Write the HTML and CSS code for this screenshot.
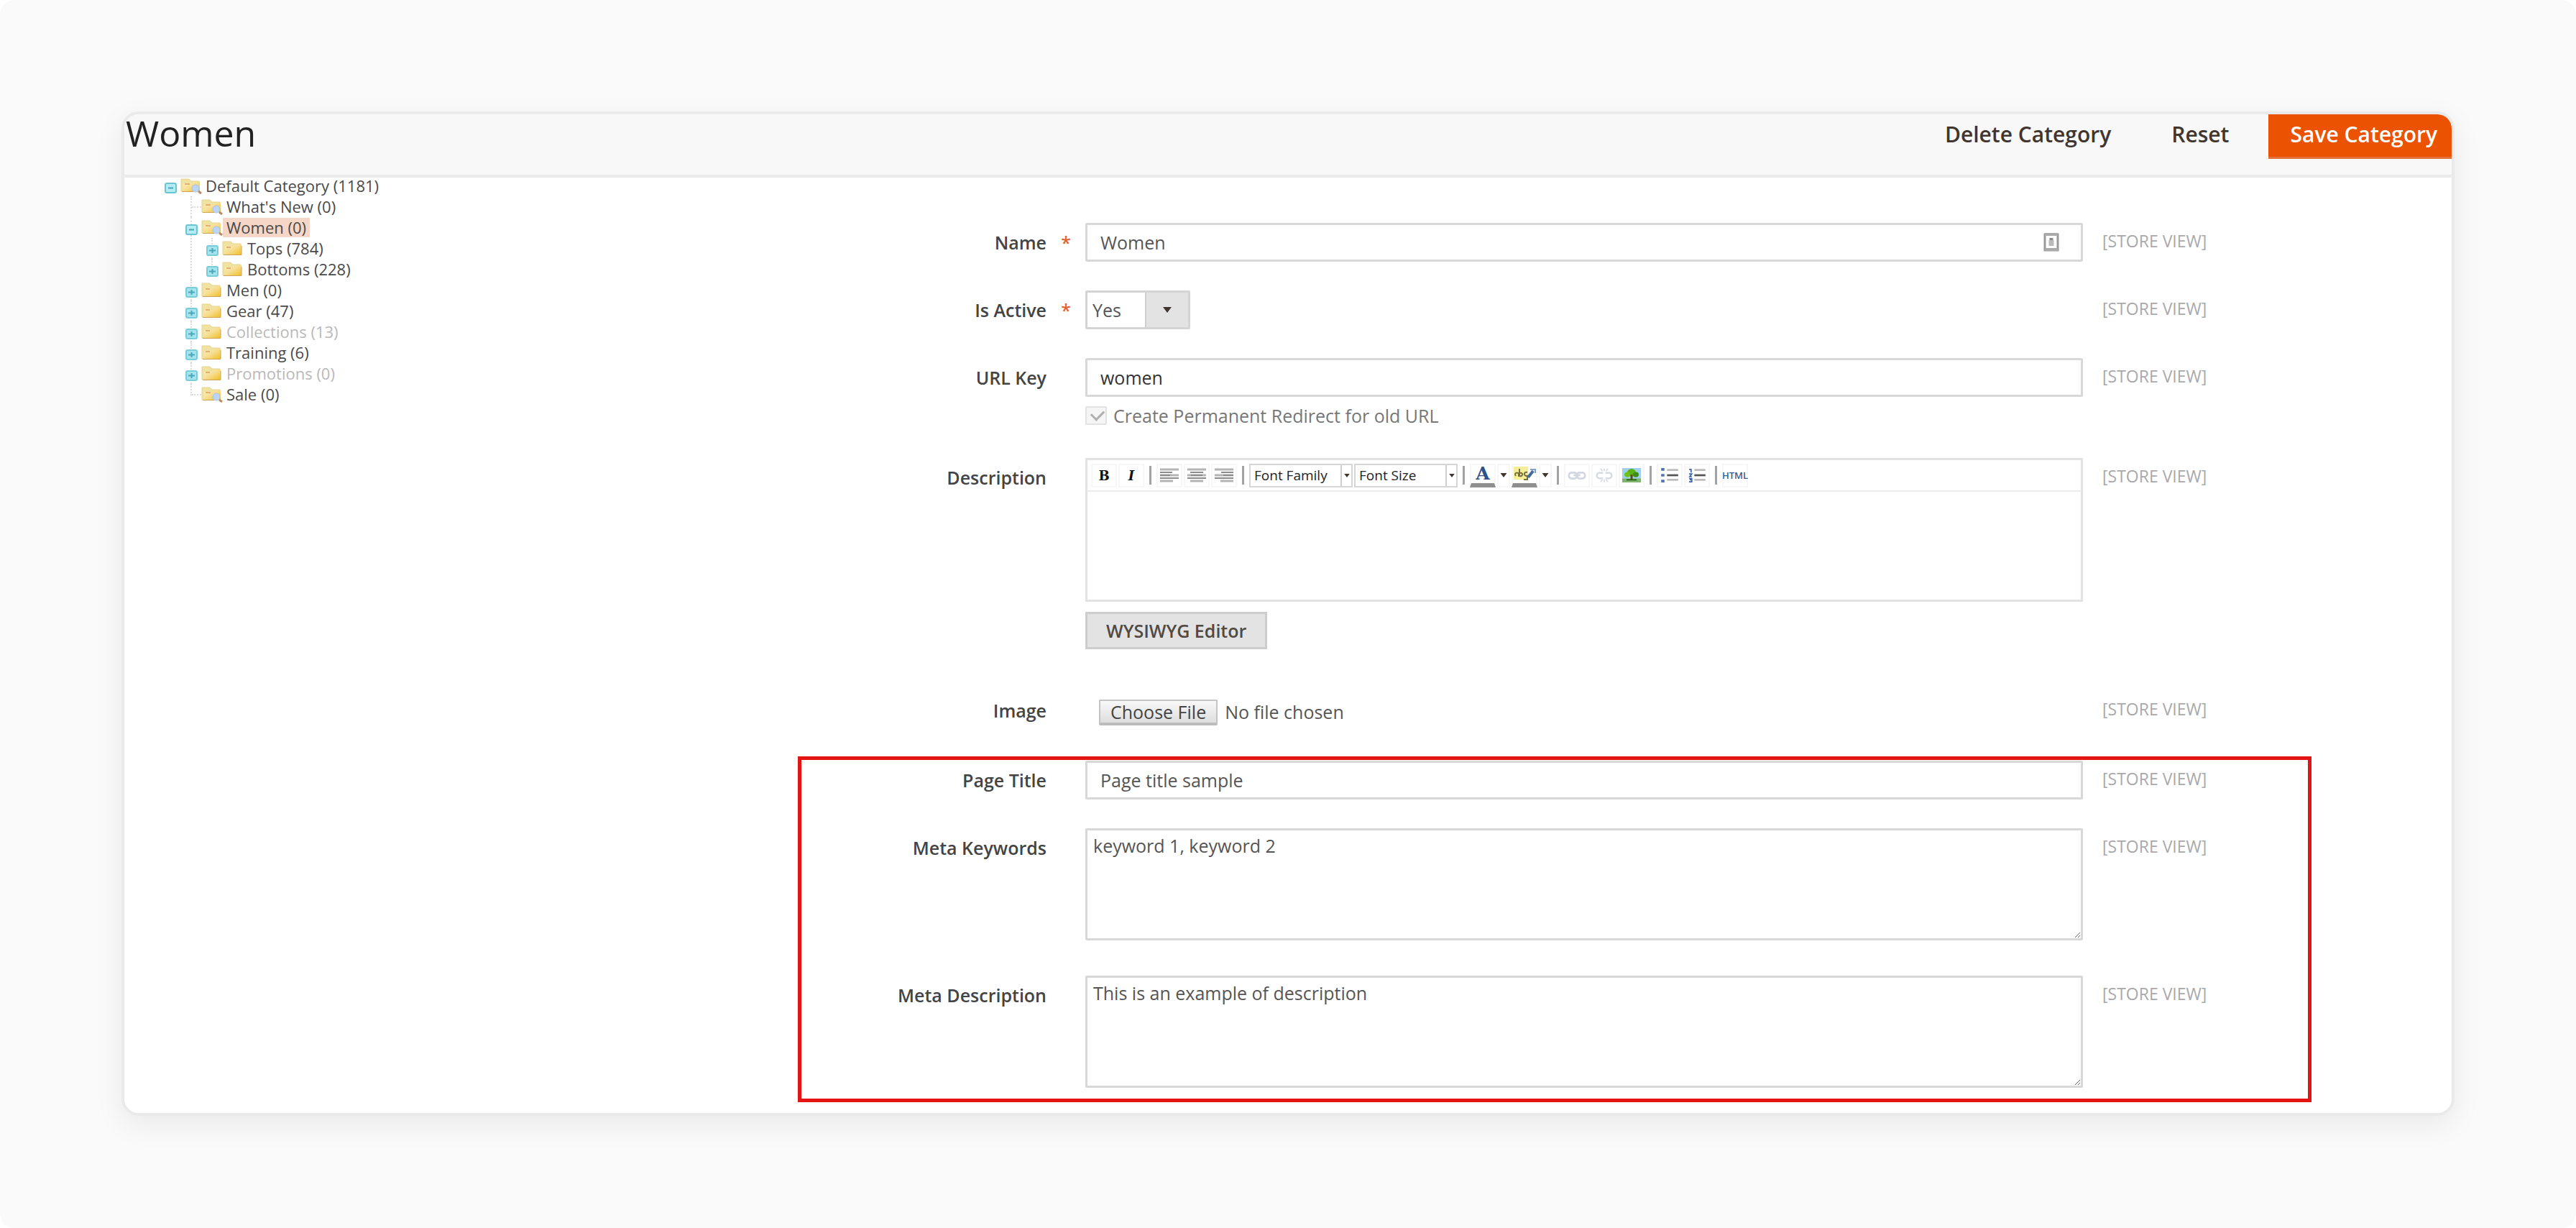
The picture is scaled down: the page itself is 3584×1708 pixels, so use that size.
FILE: index.html
```html
<!DOCTYPE html>
<html lang="en">
<head>
    <meta charset="UTF-8">
    <meta name="viewport" content="width=device-width, initial-scale=1.0">
    <title>Women / Categories</title>
    <link rel="stylesheet" href="styles.css">
</head>
<body>
    <!-- shared icons -->
    <svg class="sprite" aria-hidden="true">
        <defs>
            <linearGradient id="gold" x1="0" y1="0" x2="1" y2="1">
                <stop offset="0" stop-color="#fbf0c8"/>
                <stop offset="0.5" stop-color="#f6dc8c"/>
                <stop offset="1" stop-color="#eec024"/>
            </linearGradient>
        </defs>
        <symbol id="folder" viewBox="0 0 30 22">
            <path d="M1 1h11l3 3h11v15H1z" fill="#f0e2a0" stroke="#e6d48e"/>
            <path d="M4 8h11l3-3h9v14H4z" fill="url(#gold)"/>
            <path d="M6 9h6" stroke="#e2b070" stroke-width="2"/>
            <path d="M2 19.500h25V7" fill="none" stroke="#d0a458"/>
        </symbol>
        <symbol id="folder-search" viewBox="0 0 30 22">
            <path d="M1 1h11l3 3h11v14H1z" fill="#f0e2a0" stroke="#e6d48e"/>
            <path d="M4 7h11l3-2h9v13H4z" fill="url(#gold)"/>
            <path d="M6 8h7" stroke="#e2b070" stroke-width="2"/>
            <path d="M2 18.500h16" stroke="#d0a458"/>
            <circle cx="21" cy="14" r="5" fill="#bcd4f6" stroke="#a9c3ea"/>
            <path d="M25 18l4 3" stroke="#b88a66" stroke-width="3"/>
        </symbol>
        <symbol id="minus" viewBox="0 0 17 15">
            <rect x="1" y="1" width="15" height="13" rx="2" fill="#b4ecf4" stroke="#6cc4d2" stroke-width="2"/>
            <path d="M5 7.500h7" stroke="#4aa6b8" stroke-width="2"/>
        </symbol>
        <symbol id="plus" viewBox="0 0 17 15">
            <rect x="1" y="1" width="15" height="13" rx="2" fill="#a4e4ee" stroke="#7accd8" stroke-width="2"/>
            <path d="M4 7.500h9M8.500 4v7" stroke="#4aa6b8" stroke-width="2"/>
        </symbol>
        <symbol id="caret" viewBox="0 0 12 8">
            <path d="M0 0h12L6 8z" fill="#41362f"/>
        </symbol>
    </svg>

    <div class="page">
        <div class="card">
            <header class="header">
                <h1>Women</h1>
                <div class="actions">
                    <button type="button" class="btn-text">Delete Category</button>
                    <button type="button" class="btn-text">Reset</button>
                    <button type="submit" form="categoryForm" class="btn-save">Save Category</button>
                </div>
            </header>

            <div class="content">
                <nav class="tree" aria-label="Categories">
                    <ul>
                        <li>
                            <div class="node">
                                <button type="button" aria-label="Collapse"><svg><use href="#minus"/></svg></button>
                                <svg class="folder"><use href="#folder-search"/></svg>
                                <a href="#">Default Category (1181)</a>
                            </div>
                            <ul>
                                <li>
                                    <div class="node leaf">
                                        <svg class="folder"><use href="#folder-search"/></svg>
                                        <a href="#">What's New (0)</a>
                                    </div>
                                </li>
                                <li>
                                    <div class="node">
                                        <button type="button" aria-label="Collapse"><svg><use href="#minus"/></svg></button>
                                        <svg class="folder"><use href="#folder-search"/></svg>
                                        <a href="#" class="selected">Women (0)</a>
                                    </div>
                                    <ul>
                                        <li>
                                            <div class="node">
                                                <button type="button" aria-label="Expand"><svg><use href="#plus"/></svg></button>
                                                <svg class="folder"><use href="#folder"/></svg>
                                                <a href="#">Tops (784)</a>
                                            </div>
                                        </li>
                                        <li>
                                            <div class="node">
                                                <button type="button" aria-label="Expand"><svg><use href="#plus"/></svg></button>
                                                <svg class="folder"><use href="#folder"/></svg>
                                                <a href="#">Bottoms (228)</a>
                                            </div>
                                        </li>
                                    </ul>
                                </li>
                                <li>
                                    <div class="node">
                                        <button type="button" aria-label="Expand"><svg><use href="#plus"/></svg></button>
                                        <svg class="folder"><use href="#folder"/></svg>
                                        <a href="#">Men (0)</a>
                                    </div>
                                </li>
                                <li>
                                    <div class="node">
                                        <button type="button" aria-label="Expand"><svg><use href="#plus"/></svg></button>
                                        <svg class="folder"><use href="#folder"/></svg>
                                        <a href="#">Gear (47)</a>
                                    </div>
                                </li>
                                <li>
                                    <div class="node">
                                        <button type="button" aria-label="Expand"><svg><use href="#plus"/></svg></button>
                                        <svg class="folder"><use href="#folder"/></svg>
                                        <a href="#" class="inactive">Collections (13)</a>
                                    </div>
                                </li>
                                <li>
                                    <div class="node">
                                        <button type="button" aria-label="Expand"><svg><use href="#plus"/></svg></button>
                                        <svg class="folder"><use href="#folder"/></svg>
                                        <a href="#">Training (6)</a>
                                    </div>
                                </li>
                                <li>
                                    <div class="node">
                                        <button type="button" aria-label="Expand"><svg><use href="#plus"/></svg></button>
                                        <svg class="folder"><use href="#folder"/></svg>
                                        <a href="#" class="inactive">Promotions (0)</a>
                                    </div>
                                </li>
                                <li>
                                    <div class="node leaf">
                                        <svg class="folder"><use href="#folder-search"/></svg>
                                        <a href="#">Sale (0)</a>
                                    </div>
                                </li>
                            </ul>
                        </li>
                    </ul>
                </nav>

                <form id="categoryForm" class="form">
                    <div class="field required">
                        <label for="name">Name</label>
                        <div class="control">
                            <input type="text" id="name" value="Women">
                            <svg class="autofill" viewBox="0 0 22 26" aria-hidden="true">
                                <rect x="2" y="2" width="18" height="22" fill="#fff" stroke="#999" stroke-width="3"/>
                                <path d="M2 2h18M2 23h18" stroke="#aaa" stroke-width="4"/>
                                <path d="M11 7v3" stroke="#888" stroke-width="5"/>
                                <path d="M11 10v8" stroke="#bbb" stroke-width="7"/>
                            </svg>
                        </div>
                        <span class="scope">[STORE VIEW]</span>
                    </div>

                    <div class="field required">
                        <label for="isActive">Is Active</label>
                        <div class="control">
                            <div class="select">
                                <select id="isActive">
                                    <option>Yes</option>
                                    <option>No</option>
                                </select>
                                <span class="arrow"><svg><use href="#caret"/></svg></span>
                            </div>
                        </div>
                        <span class="scope">[STORE VIEW]</span>
                    </div>

                    <div class="field">
                        <label for="urlKey">URL Key</label>
                        <div class="control">
                            <input type="text" id="urlKey" class="dark" value="women">
                            <div class="check">
                                <input type="checkbox" id="redirect" checked disabled>
                                <label for="redirect">Create Permanent Redirect for old URL</label>
                            </div>
                        </div>
                        <span class="scope">[STORE VIEW]</span>
                    </div>

                    <div class="field">
                        <label for="description">Description</label>
                        <div class="control">
                            <div class="editor">
                                <div class="toolbar">
                                    <button type="button" class="bold">B</button>
                                    <button type="button" class="italic">I</button>
                                    <span class="sep"></span>
                                    <button type="button" aria-label="Align left"><svg viewBox="0 0 26 20"><path d="M0 2h26M0 10h26M0 18h18" stroke="#b4b4b4" stroke-width="3"/><path d="M0 6h17M0 14h26M0 10h14" stroke="#8c8c8c" stroke-width="2"/></svg></button>
                                    <button type="button" aria-label="Align center"><svg viewBox="0 0 26 20"><path d="M0 2h26M0 10h26M4 18h18" stroke="#b4b4b4" stroke-width="3"/><path d="M4 6h18M0 14h26M5 10h16" stroke="#8c8c8c" stroke-width="2"/></svg></button>
                                    <button type="button" aria-label="Align right"><svg viewBox="0 0 26 20"><path d="M0 2h26M0 10h26M8 18h18" stroke="#b4b4b4" stroke-width="3"/><path d="M9 6h17M0 14h26M12 10h14" stroke="#8c8c8c" stroke-width="2"/></svg></button>
                                    <span class="sep"></span>
                                    <div class="tool-select">
                                        <select aria-label="Font Family"><option>Font Family</option></select>
                                        <span class="arrow"><svg><use href="#caret"/></svg></span>
                                    </div>
                                    <div class="tool-select">
                                        <select aria-label="Font Size"><option>Font Size</option></select>
                                        <span class="arrow"><svg><use href="#caret"/></svg></span>
                                    </div>
                                    <span class="sep"></span>
                                    <button type="button" class="color">A</button>
                                    <button type="button" class="more" aria-label="Text color"><svg><use href="#caret"/></svg></button>
                                    <button type="button" class="color" aria-label="Highlight"><svg viewBox="0 0 32 20"><rect x="1" y="0" width="20" height="18" fill="#f5ef9a"/><path d="M4 13c-3-4 2-6 4-3v4M9 3v10c5 2 6-6 0-4M20 8c-5-2-6 6 0 5v5h-5" fill="none" stroke="#77703a" stroke-width="2"/><path d="M21 15l7-9" stroke="#46699c" stroke-width="4"/><path d="M24 4h7v5" fill="none" stroke="#7fa0cc" stroke-width="2"/></svg></button>
                                    <button type="button" class="more" aria-label="Highlight color"><svg><use href="#caret"/></svg></button>
                                    <span class="sep"></span>
                                    <button type="button" disabled aria-label="Link"><svg viewBox="0 0 28 20"><g fill="none" stroke="#d3d7e2" stroke-width="3"><rect x="2" y="6" width="12" height="9" rx="4"/><rect x="14" y="6" width="12" height="9" rx="4"/><path d="M9 10h10"/></g></svg></button>
                                    <button type="button" disabled aria-label="Unlink"><svg viewBox="0 0 28 24"><g fill="none" stroke="#d6dae3" stroke-width="3"><path d="M12 8H6a4 4 0 0 0 0 9h6M16 8h6a4 4 0 0 1 0 9h-6"/><path d="M8 1l3 4M14 1v4M20 1l-3 4M8 23l3-4M14 23v-4M20 23l-3-4" stroke-width="2"/></g></svg></button>
                                    <button type="button" aria-label="Image"><svg viewBox="0 0 26 22" preserveAspectRatio="none"><rect width="26" height="22" fill="#9fd0ee"/><path d="M0 16h26v6H0z" fill="#7fb56f"/><circle cx="13" cy="7" r="6" fill="#5cb414"/><circle cx="7" cy="10" r="4" fill="#6ec21c"/><circle cx="19" cy="10" r="4" fill="#3d8f10"/><path d="M13 10v8" stroke="#5d4a1c" stroke-width="3"/><path d="M6 18h14" stroke="#27620e" stroke-width="2"/></svg></button>
                                    <span class="sep"></span>
                                    <button type="button" aria-label="Bulleted list"><svg viewBox="0 0 26 22"><path d="M0 2h5M0 11h5M0 20h5" stroke="#4c74b8" stroke-width="4"/><path d="M9 3h17M9 18h17" stroke="#bdbdbd" stroke-width="3"/><path d="M9 11h17" stroke="#555" stroke-width="3"/></svg></button>
                                    <button type="button" aria-label="Numbered list"><svg viewBox="0 0 26 22"><path d="M1 2h3v5M1 9h4l-3 4h3M1 16h4v5H1M2 18h3" fill="none" stroke="#3f66b0" stroke-width="2"/><path d="M9 3h17M9 18h17" stroke="#bdbdbd" stroke-width="3"/><path d="M9 11h17" stroke="#555" stroke-width="3"/></svg></button>
                                    <span class="sep"></span>
                                    <button type="button" class="html">HTML</button>
                                </div>
                                <textarea id="description"></textarea>
                            </div>
                            <button type="button" class="btn-editor">WYSIWYG Editor</button>
                        </div>
                        <span class="scope">[STORE VIEW]</span>
                    </div>

                    <div class="field">
                        <label for="image">Image</label>
                        <div class="control">
                            <input type="file" id="image">
                        </div>
                        <span class="scope">[STORE VIEW]</span>
                    </div>

                    <div class="seo">
                        <div class="field">
                            <label for="pageTitle">Page Title</label>
                            <div class="control">
                                <input type="text" id="pageTitle" value="Page title sample">
                            </div>
                            <span class="scope">[STORE VIEW]</span>
                        </div>

                        <div class="field">
                            <label for="metaKeywords">Meta Keywords</label>
                            <div class="control">
                                <textarea id="metaKeywords" class="meta">keyword 1, keyword 2</textarea>
                            </div>
                            <span class="scope">[STORE VIEW]</span>
                        </div>

                        <div class="field">
                            <label for="metaDescription">Meta Description</label>
                            <div class="control">
                                <textarea id="metaDescription" class="meta">This is an example of description</textarea>
                            </div>
                            <span class="scope">[STORE VIEW]</span>
                        </div>
                    </div>
                </form>
            </div>
        </div>
    </div>
</body>
</html>
```

FILE: styles.css
```css
* {
    box-sizing: border-box;
}
body {
    margin: 0;
    background-color: #fff;
    font-family: "Open Sans", sans-serif;
    font-size: 25px;
    color: #555;
}
button, input, select, textarea {
    font-family: inherit;
    font-size: inherit;
    color: inherit;
}
.sprite {
    position: absolute;
    width: 0;
    height: 0;
}
.page {
    min-height: 100vh;
    padding: 155px 169px;
    background-color: #fafafa;
    border-radius: 20px;
}
.card {
    background-color: #fff;
    border: 4px solid #eaeaea;
    border-radius: 24px;
    box-shadow: 0 12px 40px rgba(0, 0, 0, 0.07);
}

/* header */
.header {
    display: flex;
    justify-content: space-between;
    height: 88px;
    background-color: #f8f8f8;
    border-bottom: 4px solid #eaeaea;
    border-radius: 20px 20px 0 0;
}
h1 {
    margin: 0;
    padding-left: 2px;
    font-size: 50px;
    font-weight: 400;
    line-height: 52px;
    color: #222;
}
.actions {
    display: flex;
    align-items: flex-start;
}
.actions button {
    height: 62px;
    padding: 0 0 8px;
    border: none;
    background: none;
    font-size: 30px;
    font-weight: 600;
    color: #41362f;
    cursor: pointer;
}
.actions .btn-text {
    margin-right: 84px;
}
.actions .btn-text + .btn-text {
    margin-right: 55px;
}
.actions .btn-save {
    padding: 0 20px 5px 30px;
    background-color: #eb5202;
    border-bottom: 3px solid #e2703a;
    border-top-right-radius: 20px;
    color: #fff;
}

.content {
    display: flex;
}

/* category tree */
.tree {
    flex: 0 0 936px;
    margin-top: -3px;
    padding-left: 56px;
    font-size: 22px;
}
.tree ul {
    margin: 0;
    padding: 0;
    list-style: none;
}
.tree ul ul {
    padding-left: 29px;
}
.tree ul ul li {
    position: relative;
}
.tree ul ul li::before {
    content: "";
    position: absolute;
    top: 0;
    bottom: 0;
    left: 7px;
    border-left: 2px dotted #dcdcdc;
}
.tree ul ul li:last-child::before {
    bottom: auto;
    height: 16px;
}
.node {
    display: flex;
    align-items: center;
    height: 29px;
}
.node button {
    position: relative;
    width: 17px;
    height: 15px;
    margin: 6px 5px 0 0;
    padding: 0;
    border: none;
    background: none;
}
.node button svg {
    display: block;
    width: 17px;
    height: 15px;
}
.node.leaf::before {
    content: "";
    width: 13px;
    margin: 0 0 0 9px;
    border-top: 2px dotted #dcdcdc;
}
.folder {
    width: 30px;
    height: 22px;
}
.node a {
    padding: 0 5px;
    line-height: 27px;
    color: #4a4a4a;
    text-decoration: none;
}
.node a.selected {
    background-color: #f5d6c7;
}
.node a.inactive {
    color: #b9b9b9;
}

/* form */
.form {
    flex: 1;
    padding: 63px 0 26px;
}
.field {
    display: grid;
    grid-template-columns: 401px 1fr 513px;
    margin-bottom: 40px;
}
.field > label {
    padding-right: 54px;
    line-height: 54px;
    font-weight: 600;
    text-align: right;
    color: #444;
}
.required > label {
    padding-right: 20px;
}
.required > label::after {
    content: "*";
    display: inline-block;
    width: 16px;
    margin-left: 18px;
    color: #e2642c;
}
.scope {
    padding-left: 27px;
    font-size: 23px;
    line-height: 50px;
    color: #a9a9a9;
}
.control {
    position: relative;
}
.control input[type="text"] {
    display: block;
    width: 100%;
    height: 54px;
    padding: 0 18px;
    border: 3px solid #d8d8d8;
    border-radius: 2px;
    background-color: #fff;
}
.control input.dark {
    color: #333;
}
.autofill {
    position: absolute;
    top: 14px;
    right: 33px;
    width: 22px;
    height: 26px;
}
.select {
    position: relative;
    width: 146px;
}
.select select {
    appearance: none;
    display: block;
    width: 100%;
    height: 54px;
    padding: 0 70px 0 7px;
    border: 3px solid #d4d4d4;
    border-radius: 2px;
    background-color: #fff;
}
.arrow {
    position: absolute;
    top: 3px;
    right: 3px;
    bottom: 3px;
    display: flex;
    align-items: center;
    justify-content: center;
    width: 60px;
    background-color: #e3e3e3;
    border-left: 2px solid #cfcfcf;
    pointer-events: none;
}
.arrow svg {
    width: 12px;
    height: 8px;
}
.check {
    display: flex;
    align-items: center;
    gap: 9px;
    height: 26px;
    margin: 13px 0 6px;
}
.check input {
    appearance: none;
    position: relative;
    width: 30px;
    height: 26px;
    margin: 0;
    border: 2px solid #e2e2e2;
    border-radius: 2px;
    background-color: #f5f5f5;
}
.check input:checked::after {
    content: "";
    position: absolute;
    top: 0;
    left: 9px;
    width: 9px;
    height: 14px;
    border: solid #b0b0b0;
    border-width: 0 3px 3px 0;
    transform: rotate(45deg);
}
.check label {
    color: #777;
}

/* editor */
.editor {
    height: 200px;
    border: 3px solid #e2e2e2;
}
.editor textarea {
    display: block;
    width: 100%;
    height: 150px;
    padding: 8px;
    border: none;
    resize: none;
}
.toolbar {
    display: flex;
    align-items: center;
    gap: 2px;
    height: 44px;
    padding: 0 5px;
    border-bottom: 2px solid #ececec;
}
.toolbar button {
    display: flex;
    align-items: center;
    justify-content: center;
    width: 36px;
    height: 33px;
    padding: 0;
    border: 2px solid #f7f7f7;
    background-color: #fff;
}
.toolbar button svg {
    width: 26px;
    height: 20px;
}
.toolbar .bold, .toolbar .italic {
    font-family: "DejaVu Serif", serif;
    font-size: 18px;
    font-weight: 700;
    color: #111;
}
.toolbar .italic {
    font-style: italic;
}
.toolbar .color {
    border-bottom: 6px solid #8f8f8f;
    font-family: "DejaVu Serif", serif;
    font-size: 25px;
    font-weight: 700;
    line-height: 24px;
    color: #2f5288;
}
.toolbar .color svg {
    width: 32px;
}
.toolbar .more {
    width: 18px;
}
.toolbar .more svg {
    width: 10px;
    height: 6px;
}
.toolbar .html {
    font-size: 13px;
    font-weight: 600;
    color: #2f5f96;
}
.sep {
    width: 3px;
    height: 26px;
    margin: 0 5px;
    background-color: #a3a3a3;
}
.tool-select {
    position: relative;
    width: 144px;
}
.tool-select select {
    appearance: none;
    display: block;
    width: 100%;
    height: 33px;
    padding: 0 20px 0 5px;
    border: 2px solid #d6d6d6;
    border-radius: 0;
    background-color: #fff;
    font-size: 19px;
    color: #222;
}
.tool-select .arrow {
    top: 2px;
    right: 2px;
    bottom: 2px;
    width: 15px;
    background-color: #fff;
}
.tool-select .arrow svg {
    width: 8px;
    height: 5px;
}
.btn-editor {
    display: block;
    height: 52px;
    margin: 14px 0 18px;
    padding: 0 26px;
    border: 3px solid #cdcdcd;
    background-color: #e3e3e3;
    font-weight: 600;
    color: #514943;
}
.control input[type="file"] {
    display: block;
    height: 57px;
    padding: 12px 0 0 19px;
}
input[type="file"]::file-selector-button {
    height: 36px;
    margin: 0 10px 0 0;
    padding: 0 14px;
    border: 2px solid #c4c4c4;
    border-bottom: 4px solid #bcbcbc;
    border-radius: 2px;
    background: linear-gradient(#f8f8f8, #dedede);
    font-family: inherit;
    font-size: 25px;
    line-height: 30px;
    color: #444;
}
.meta {
    display: block;
    width: 100%;
    height: 156px;
    margin-bottom: 9px;
    padding: 6px 8px;
    border: 3px solid #d8d8d8;
    border-radius: 2px;
    line-height: 30px;
    resize: both;
}

/* search engine fields, framed */
.seo {
    position: relative;
}
.seo .field:last-child {
    margin-bottom: 0;
}
.seo::after {
    content: "";
    position: absolute;
    top: -6px;
    right: 195px;
    bottom: -11px;
    left: 1px;
    border: 5px solid #e21414;
    pointer-events: none;
}
```
